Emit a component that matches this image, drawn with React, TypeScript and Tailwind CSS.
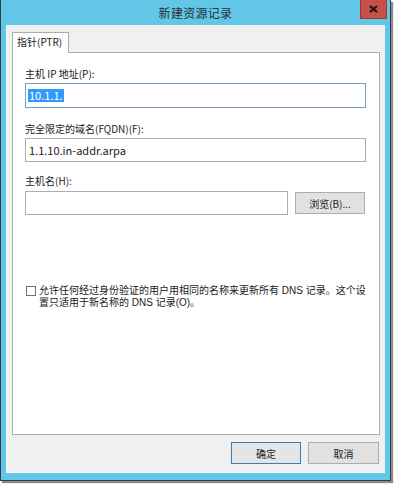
const font = { fontFamily: '"Noto Sans CJK SC", "Noto Sans", sans-serif' };

function Field({ label, children }: { label: string; children: React.ReactNode }) {
  return (
    <div className="flex flex-col">
      <div className="h-[12px] text-[10px] leading-[12px] text-[#1a1a1a] whitespace-nowrap">{label}</div>
      {children}
    </div>
  );
}

function App() {
  return (
    <div className="w-[395px] h-[484px] bg-white overflow-hidden" style={font}>
      <div className="w-[391px] h-[481px] flex flex-col bg-[#62c6e7] border-l border-r border-b border-[#2f3f4a] shadow-[2px_2px_1px_rgba(0,0,0,0.45)]">
        {/* title bar */}
        <div className="relative h-[25px] flex items-center justify-center">
          <span className="text-[12px] leading-[14px] text-[#263238] tracking-[0.3px]">新建资源记录</span>
          <div className="absolute right-[3px] top-0 w-[27px] h-[19px] bg-[#c7514a] border border-t-0 border-[#9d3b36] flex items-center justify-center">
            <svg width="9" height="8" viewBox="0 0 9 8">
              <path d="M1 1 L8 7 M8 1 L1 7" stroke="#141414" strokeWidth="2" />
            </svg>
          </div>
        </div>

        {/* client */}
        <div className="mx-[5px] h-[448px] bg-[#f0f0f0] border-l border-b border-[#fafafa] flex flex-col px-[5px] pt-[7px]">
          {/* tab header */}
          <div className="flex h-[21px] -mb-px relative z-10">
            <div className="w-[57px] h-[21px] bg-white border border-b-0 border-[#acacac] pl-[4px] pt-[3px] text-[10px] leading-[12px] text-[#1a1a1a]">
              指针(PTR)
            </div>
          </div>

          {/* tab panel */}
          <div className="h-[383px] bg-white border border-[#acacac] flex flex-col px-[12px] pt-[15px]">
            <Field label="主机 IP 地址(P):">
              <div className="mt-[3px] w-[341px] h-[25px] border border-[#7b9ebd] flex items-center pl-[2px]">
                <span className="bg-[#3399ff] text-white text-[11px] leading-[13px] px-[1px]">10.1.1.</span>
              </div>
            </Field>

            <div className="mt-[15px]">
              <Field label="完全限定的域名(FQDN)(F):">
                <div className="mt-[3px] w-[341px] h-[24px] border border-[#abadb3] flex items-center pl-[3px] text-[11px] text-[#1a1a1a]">
                  1.1.10.in-addr.arpa
                </div>
              </Field>
            </div>

            <div className="mt-[13px]">
              <Field label="主机名(H):">
                <div className="mt-[4px] flex items-center gap-[7px]">
                  <div className="w-[263px] h-[24px] border border-[#abadb3]" />
                  <div className="w-[70px] h-[22px] bg-[#e1e1e1] border border-[#adadad] flex items-center justify-center text-[10px] text-[#1a1a1a]">
                    浏览(B)...
                  </div>
                </div>
              </Field>
            </div>

            <div className="mt-[70px] flex items-start gap-[3px]">
              <div className="mt-[1px] ml-px w-[10px] h-[10px] border border-[#707070] bg-white shrink-0" />
              <div className="flex flex-col text-[10px] leading-[12px] text-[#1a1a1a] whitespace-nowrap font-['Liberation_Sans','Noto_Sans_CJK_SC',sans-serif]">
                <div className="h-[12px]">允许任何经过身份验证的用户用相同的名称来更新所有 DNS 记录。这个设</div>
                <div className="h-[12px]">置只适用于新名称的 DNS 记录(O)。</div>
              </div>
            </div>
          </div>

          {/* footer buttons */}
          <div className="mt-[7px] flex justify-end gap-[7px] pr-px">
            <div className="w-[70px] h-[22px] bg-[#e5e5e5] border border-[#3c7fb1] flex items-center justify-center text-[10px] text-[#1a1a1a]">
              确定
            </div>
            <div className="w-[71px] h-[22px] bg-[#e1e1e1] border border-[#adadad] flex items-center justify-center text-[10px] text-[#1a1a1a]">
              取消
            </div>
          </div>
        </div>
      </div>
    </div>
  );
}

export default App;
